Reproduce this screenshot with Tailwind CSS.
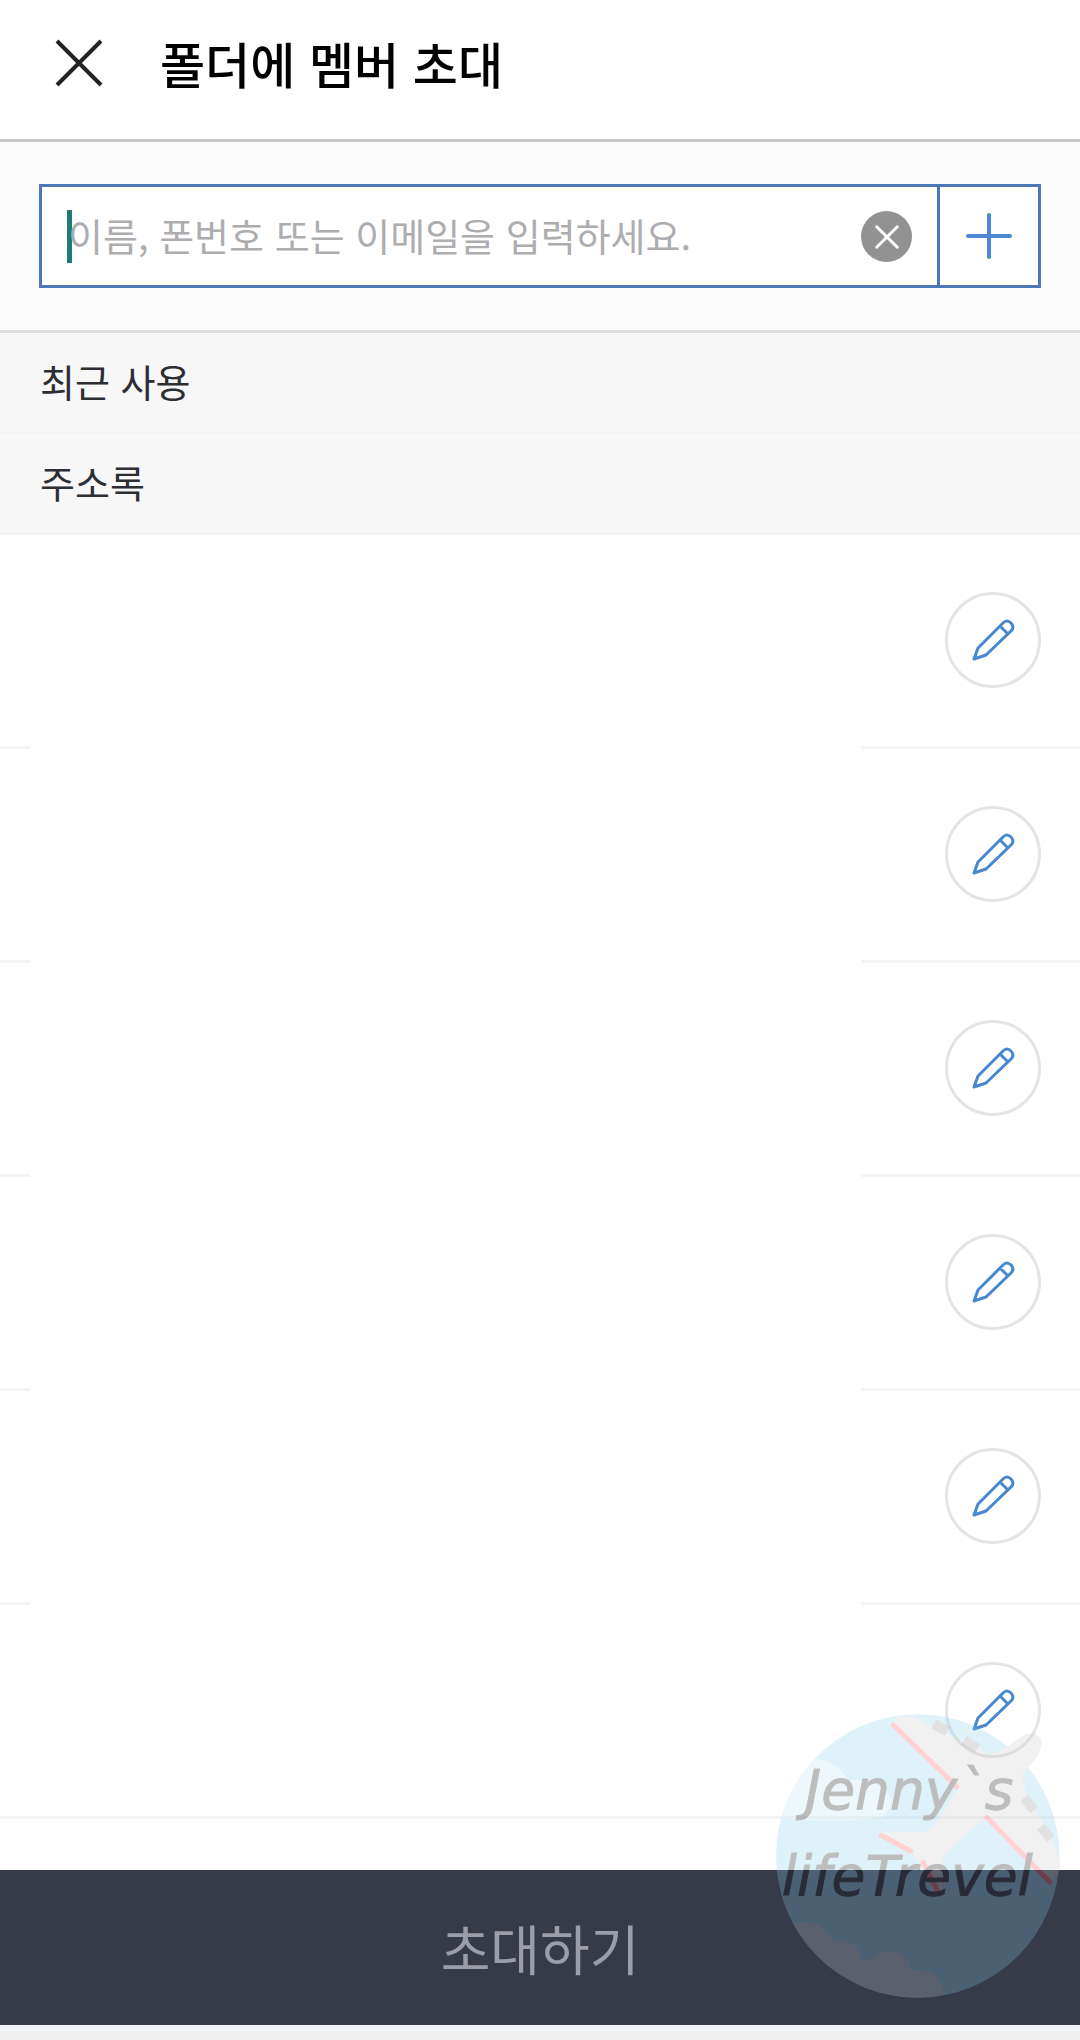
<!DOCTYPE html>
<html lang="ko">
<head>
<meta charset="utf-8">
<meta name="viewport" content="width=device-width, initial-scale=1">
<title>폴더에 멤버 초대</title>
<script src="https://cdn.jsdelivr.net/npm/@tailwindcss/browser@4"></script>
</head>
<body class="bg-white font-['Noto_Sans_CJK_KR',sans-serif]">
<div class="relative flex min-h-screen flex-col overflow-hidden">
  <header class="flex h-[142px] items-center gap-[54px] border-b-3 border-[#c9c9c9] px-[52px] pb-[14px]">
    <button type="button" aria-label="닫기" class="size-[54px]">
      <svg class="size-full" viewBox="0 0 54 54" fill="none" stroke="#222" stroke-width="4"><path d="M5 5 49 49M49 5 5 49"/></svg>
    </button>
    <h1 class="text-[49px] leading-[60px] font-medium text-black">폴더에 멤버 초대</h1>
  </header>

  <form class="border-b-3 border-[#dfdfdf] bg-[#fcfcfc] px-[39px] py-[42px]">
    <div class="flex h-[104px] border-3 border-[#4c78b8] bg-white">
      <div class="flex flex-1 items-center px-[25px]">
        <span class="h-[53px] w-[5px] bg-[#1d7d70]"></span>
        <input type="text" aria-label="초대할 멤버" placeholder="이름, 폰번호 또는 이메일을 입력하세요." class="-ml-1 h-[60px] min-w-0 flex-1 bg-transparent pb-1 text-[38px] text-[#333] outline-none placeholder:text-[#adadaf]">
        <button type="reset" aria-label="지우기" class="size-[51px]">
          <svg class="size-full" viewBox="0 0 52 52"><circle cx="26" cy="26" r="26" fill="#929292"/><path d="M16 16 37 37M37 16 16 37" fill="none" stroke="#fff" stroke-width="3" stroke-linecap="round"/></svg>
        </button>
      </div>
      <button type="button" aria-label="추가" class="grid w-[101px] place-items-center border-l-3 border-[#4c78b8]">
        <svg class="size-12" viewBox="0 0 48 48" fill="none" stroke="#4f87d3" stroke-width="4" stroke-linecap="round"><path d="M24 3V45M3 24H45"/></svg>
      </button>
    </div>
  </form>

  <main class="flex-1">
    <h2 class="flex h-[101px] items-center border-b-3 border-[#f4f4f4] bg-[#f7f7f7] px-10 pb-1 text-[38px] text-[#2d2d34]">최근 사용</h2>
    <h2 class="flex h-[101px] items-center border-b-3 border-[#f3f3f3] bg-[#f7f7f7] px-10 pb-1 text-[38px] text-[#2d2d34]">주소록</h2>
    <ul id="contacts"></ul>
  </main>

  <footer>
    <button type="submit" class="h-[155px] w-full bg-[#373b48] text-[54px] text-[#9b9ea6]">초대하기</button>
    <div class="h-[15px] border-t-6 border-[#f3f4fa] bg-[#f0f0f0]"></div>
  </footer>

  <svg class="pointer-events-none absolute right-0 bottom-0 h-[400px] w-[340px]" viewBox="0 0 1020 1200" role="img" aria-label="Jenny`s lifeTrevel">
    <defs><clipPath id="globe"><circle cx="533" cy="648" r="425"/></clipPath></defs>
    <g opacity=".255">
      <circle cx="533" cy="648" r="425" fill="#85cdec"/>
      <g clip-path="url(#globe)">
        <path fill="#bfe5f5" d="M100 540V400Q170 350 230 358 290 360 325 420 400 415 440 455 470 490 430 530 330 550 100 535Z"/>
        <path fill="#c0cdd6" d="M140 855Q190 835 235 855 270 875 278 905 325 890 350 925 365 940 362 962 385 970 395 952 430 925 480 940 510 960 515 992 565 985 590 1010 605 1025 615 1060L560 1100 140 1100Z"/>
      </g>
      <path fill="#ccc" d="M455 250Q465 225 500 228 530 232 560 250L755 345Q800 325 850 285 885 272 903 295 910 330 880 365L850 400Q845 430 860 455L955 640Q975 690 930 730L735 530 640 620Q605 645 603 680L608 745 598 765 515 635 418 582 430 574 545 577Q570 575 590 545L655 445Z"/>
      <g fill="none" stroke="#ff4d55" stroke-width="15" stroke-linecap="round">
        <path d="M460 255 650 440M740 532 930 727M423 586 512 633M549 668 598 762"/>
      </g>
      <g stroke="#8d8d8d" stroke-width="30"><path d="M582 252 622 274M672 300 712 326M852 474 882 510M902 560 932 596"/></g>
      <g fill="#000" stroke="#000" stroke-width="3" font-family="'DejaVu Sans', sans-serif" font-style="italic" font-size="165">
        <text x="195" y="508">Jenny`s</text>
        <text x="125" y="765">lifeTrevel</text>
      </g>
    </g>
  </svg>
</div>

<template id="row">
  <li class="group flex h-[214px] flex-col">
    <div class="flex flex-1 items-center justify-end pr-[39px] pb-0.5">
      <button type="button" aria-label="편집" class="grid size-24 place-items-center rounded-full border-3 border-[#e4e4e4]">
        <svg class="size-12" viewBox="0 0 48 48" fill="none" stroke="#4687cf" stroke-width="3" stroke-linejoin="round"><path d="M5 43 9 32 34 7Q38 3 42 7T42 15L17 39ZM31 10 39 18"/></svg>
      </button>
    </div>
    <div class="flex h-[3px] justify-between group-last:bg-[#f4f4f4]"><span class="w-[30px] bg-[#f4f4f4]"></span><span class="w-[219px] bg-[#f4f4f4]"></span></div>
  </li>
</template>
<script>
  const list = document.getElementById('contacts');
  for (let i = 0; i < 6; i++) list.append(document.getElementById('row').content.cloneNode(true));
</script>
</body>
</html>
